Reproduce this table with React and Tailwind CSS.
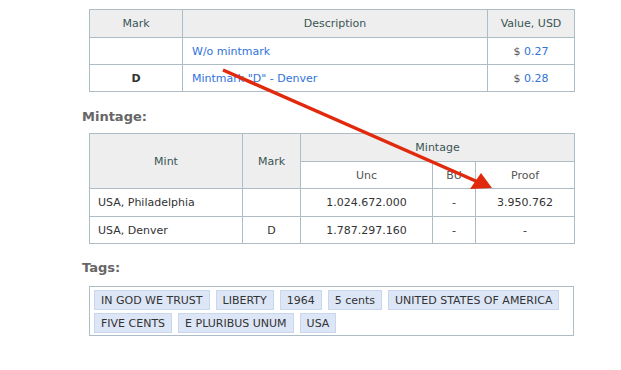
import React from "react";

const bd = "border border-[#aebcc6]";
const th = `${bd} bg-[#eeeeee] font-normal text-[#3a5555] text-center align-middle`;
const td = `${bd} text-[#333333] align-middle`;

const tags = [
  "IN GOD WE TRUST",
  "LIBERTY",
  "1964",
  "5 cents",
  "UNITED STATES OF AMERICA",
  "FIVE CENTS",
  "E PLURIBUS UNUM",
  "USA",
];

export default function App() {
  return (
    <div className="relative w-[621px] h-[370px] bg-white overflow-hidden font-['DejaVu_Sans',Verdana,sans-serif] text-[11px] leading-[13px]">
      <div className="flex flex-col pl-[82px] pt-[9px]">
        <table className="ml-[7px] w-[485px] table-fixed border-collapse">
          <colgroup>
            <col className="w-[93px]" />
            <col className="w-[305px]" />
            <col className="w-[87px]" />
          </colgroup>
          <thead>
            <tr className="h-[28px]">
              <th className={th}>Mark</th>
              <th className={th}>Description</th>
              <th className={th}>Value, USD</th>
            </tr>
          </thead>
          <tbody>
            <tr className="h-[27px]">
              <td className={td}></td>
              <td className={`${td} pl-[9px]`}>
                <span className="text-[#2f72db]">W/o mintmark</span>
              </td>
              <td className={`${td} text-center`}>
                <span className="text-[#555]">$</span> <span className="text-[#2f72db]">0.27</span>
              </td>
            </tr>
            <tr className="h-[27px]">
              <td className={`${td} text-center font-bold`}>D</td>
              <td className={`${td} pl-[9px]`}>
                <span className="text-[#2f72db]">Mintmark "D" - Denver</span>
              </td>
              <td className={`${td} text-center`}>
                <span className="text-[#555]">$</span> <span className="text-[#2f72db]">0.28</span>
              </td>
            </tr>
          </tbody>
        </table>

        <h3 className="mt-[17px] mb-[8px] text-[13px] leading-[16px] font-bold text-[#666666]">Mintage:</h3>

        <table className="ml-[7px] w-[485px] table-fixed border-collapse">
          <colgroup>
            <col className="w-[153px]" />
            <col className="w-[58px]" />
            <col className="w-[132px]" />
            <col className="w-[43px]" />
            <col className="w-[99px]" />
          </colgroup>
          <thead>
            <tr className="h-[28px]">
              <th rowSpan={2} className={th}>Mint</th>
              <th rowSpan={2} className={th}>Mark</th>
              <th colSpan={3} className={th}>Mintage</th>
            </tr>
            <tr className="h-[27px]">
              <th className={`${bd} bg-white font-normal text-[#555] text-center`}>Unc</th>
              <th className={`${bd} bg-white font-normal text-[#555] text-center`}>BU</th>
              <th className={`${bd} bg-white font-normal text-[#555] text-center`}>Proof</th>
            </tr>
          </thead>
          <tbody>
            <tr className="h-[28px]">
              <td className={`${td} pl-[8px]`}>USA, Philadelphia</td>
              <td className={`${td} text-center`}></td>
              <td className={`${td} text-center`}>1.024.672.000</td>
              <td className={`${td} text-center`}>-</td>
              <td className={`${td} text-center`}>3.950.762</td>
            </tr>
            <tr className="h-[27px]">
              <td className={`${td} pl-[8px]`}>USA, Denver</td>
              <td className={`${td} text-center`}>D</td>
              <td className={`${td} text-center`}>1.787.297.160</td>
              <td className={`${td} text-center`}>-</td>
              <td className={`${td} text-center`}>-</td>
            </tr>
          </tbody>
        </table>

        <h3 className="mt-[16px] mb-[10px] text-[13px] leading-[16px] font-bold text-[#666666]">Tags:</h3>

        <div className={`ml-[7px] w-[485px] ${bd} pl-[4px] pr-[4px] pt-[3px] pb-[2px] flex flex-wrap gap-x-[6px] gap-y-[3px]`}>
          {tags.map((t) => (
            <span
              key={t}
              className="h-[20px] px-[6px] flex items-center bg-[#dde6f6] border border-[#c9d7ee] text-[#333333]"
            >
              {t}
            </span>
          ))}
        </div>
      </div>

      <svg className="absolute left-0 top-0 pointer-events-none" width="621" height="370" viewBox="0 0 621 370">
        <line x1="223" y1="70" x2="478" y2="182" stroke="#e1290d" strokeWidth="3.5" />
        <polygon points="492,188 470,189 481,173" fill="#e1290d" />
      </svg>
    </div>
  );
}
